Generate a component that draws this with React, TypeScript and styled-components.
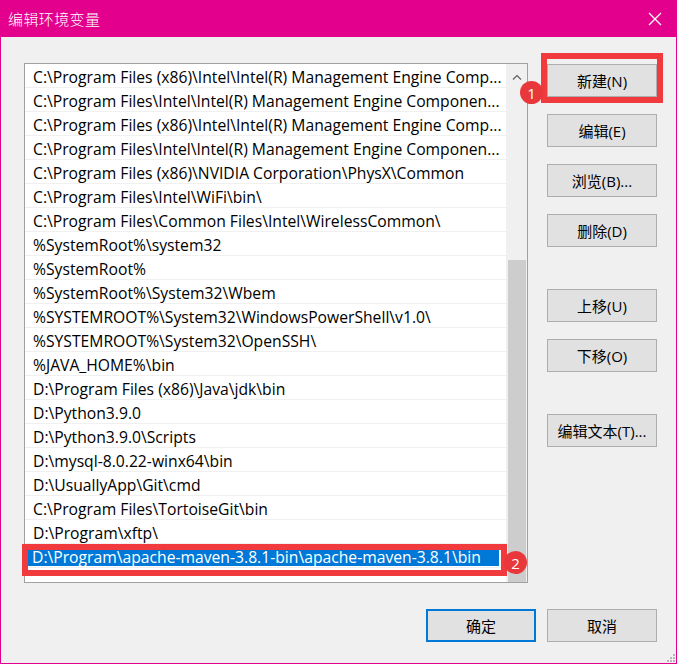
import React from 'react';
import styled, { createGlobalStyle } from 'styled-components';

const GlobalStyle = createGlobalStyle`
  html, body {
    margin: 0;
    padding: 0;
    background: #f0f0f0;
  }
  * {
    box-sizing: border-box;
  }
`;

const paths: string[] = [
  'C:\\Program Files (x86)\\Intel\\Intel(R) Management Engine Comp...',
  'C:\\Program Files\\Intel\\Intel(R) Management Engine Componen...',
  'C:\\Program Files (x86)\\Intel\\Intel(R) Management Engine Comp...',
  'C:\\Program Files\\Intel\\Intel(R) Management Engine Componen...',
  'C:\\Program Files (x86)\\NVIDIA Corporation\\PhysX\\Common',
  'C:\\Program Files\\Intel\\WiFi\\bin\\',
  'C:\\Program Files\\Common Files\\Intel\\WirelessCommon\\',
  '%SystemRoot%\\system32',
  '%SystemRoot%',
  '%SystemRoot%\\System32\\Wbem',
  '%SYSTEMROOT%\\System32\\WindowsPowerShell\\v1.0\\',
  '%SYSTEMROOT%\\System32\\OpenSSH\\',
  '%JAVA_HOME%\\bin',
  'D:\\Program Files (x86)\\Java\\jdk\\bin',
  'D:\\Python3.9.0',
  'D:\\Python3.9.0\\Scripts',
  'D:\\mysql-8.0.22-winx64\\bin',
  'D:\\UsuallyApp\\Git\\cmd',
  'C:\\Program Files\\TortoiseGit\\bin',
  'D:\\Program\\xftp\\',
];

const editing = 'D:\\Program\\apache-maven-3.8.1-bin\\apache-maven-3.8.1\\bin';

const sideButtons = [
  { label: '新建(N)', gap: 0 },
  { label: '编辑(E)', gap: 17 },
  { label: '浏览(B)...', gap: 17 },
  { label: '删除(D)', gap: 17 },
  { label: '上移(U)', gap: 42 },
  { label: '下移(O)', gap: 17 },
  { label: '编辑文本(T)...', gap: 42 },
];

const App = () => {
  return (
    <>
      <GlobalStyle />
      <Window>
        <TitleBar>
          <Title>编辑环境变量</Title>
          <CloseIcon width="14" height="14" viewBox="0 0 14 14">
            <line x1="1" y1="1" x2="13" y2="13" stroke="#fff" strokeWidth="1.2" />
            <line x1="13" y1="1" x2="1" y2="13" stroke="#fff" strokeWidth="1.2" />
          </CloseIcon>
        </TitleBar>
        <Body>
          <Main>
            <ListBox>
              <Rows>
                {paths.map((p, i) => (
                  <Row key={i}>{p}</Row>
                ))}
                <Row>
                  <EditField>{editing}</EditField>
                </Row>
                <RowMarker>
                  <Badge $x={476} $y={1}>2</Badge>
                </RowMarker>
              </Rows>
              <ScrollBar>
                <ArrowBox>
                  <svg width="10" height="6" viewBox="0 0 10 6">
                    <polyline points="1,5.5 5,1.5 9,5.5" fill="none" stroke="#606060" strokeWidth="1.2" />
                  </svg>
                </ArrowBox>
                <Track>
                  <Thumb />
                </Track>
              </ScrollBar>
            </ListBox>
            <ButtonColumn>
              {sideButtons.map((b, i) => (
                <SideSlot key={b.label} $gap={b.gap}>
                  <Button>{b.label}</Button>
                  {i === 0 && (
                    <ButtonMarker>
                      <Badge $x={-27} $y={22}>1</Badge>
                    </ButtonMarker>
                  )}
                </SideSlot>
              ))}
            </ButtonColumn>
          </Main>
          <Footer>
            <Button $primary>确定</Button>
            <Button>取消</Button>
          </Footer>
        </Body>
        <Grip width="8" height="8" viewBox="0 0 8 8">
          <rect x="6" y="0" width="2" height="2" fill="#b8b8b8" />
          <rect x="3" y="3" width="2" height="2" fill="#b8b8b8" />
          <rect x="6" y="3" width="2" height="2" fill="#b8b8b8" />
          <rect x="0" y="6" width="2" height="2" fill="#b8b8b8" />
          <rect x="3" y="6" width="2" height="2" fill="#b8b8b8" />
          <rect x="6" y="6" width="2" height="2" fill="#b8b8b8" />
        </Grip>
      </Window>
    </>
  );
};

export default App;

const uiFont = `"Open Sans", "Noto Sans CJK SC", sans-serif`;

const Window = styled.div`
  position: relative;
  width: 677px;
  height: 664px;
  background: #f0f0f0;
  border: 1px solid #e3008c;
  border-top: none;
  font-family: ${uiFont};
  display: flex;
  flex-direction: column;
`;

const TitleBar = styled.div`
  height: 37px;
  margin: 0 -1px;
  background: #e3008c;
  display: flex;
  align-items: center;
  justify-content: space-between;
  padding: 0 15px 0 8px;
  flex-shrink: 0;
`;

const Title = styled.div`
  color: #ffffff;
  font-family: "Noto Sans CJK SC", sans-serif;
  font-weight: 300;
  font-size: 15px;
  letter-spacing: 0.4px;
`;

const CloseIcon = styled.svg`
  display: block;
`;

const Body = styled.div`
  flex: 1;
  display: flex;
  flex-direction: column;
  padding: 26px 19px 0 23px;
`;

const Main = styled.div`
  display: flex;
  gap: 19px;
`;

const ListBox = styled.div`
  position: relative;
  width: 504px;
  height: 520px;
  background: #ffffff;
  border: 1px solid #a0a0a0;
  display: flex;
`;

const Rows = styled.div`
  position: relative;
  flex: 1;
  display: flex;
  flex-direction: column;
`;

const Row = styled.div`
  height: 24px;
  padding: 2px 0 0 8px;
  border-bottom: 1px solid #f0f0f0;
  display: flex;
  align-items: center;
  font-size: 15.7px;
  color: #000000;
  white-space: nowrap;
  overflow: hidden;
`;

const EditField = styled.span`
  display: flex;
  align-items: center;
  width: 471px;
  height: 19px;
  margin: 0 0 0 -5px;
  padding-left: 4px;
  background: #0078d7;
  color: #ffffff;
`;

const RowMarker = styled.div`
  position: absolute;
  left: -3px;
  top: 480px;
  width: 485px;
  height: 32px;
  border: 6px solid #f03a3d;
`;

const Badge = styled.div<{ $x: number; $y: number }>`
  position: absolute;
  left: ${(p) => p.$x}px;
  top: ${(p) => p.$y}px;
  width: 23px;
  height: 23px;
  border-radius: 50%;
  background: #e8383b;
  color: #ffffff;
  font-family: "Open Sans", sans-serif;
  font-size: 15px;
  display: flex;
  align-items: center;
  justify-content: center;
`;

const ScrollBar = styled.div`
  width: 21px;
  display: flex;
  flex-direction: column;
  background: #f0f0f0;
  border-left: 1px solid #f0f0f0;
`;

const ArrowBox = styled.div`
  height: 17px;
  display: flex;
  align-items: flex-end;
  justify-content: center;
  padding-bottom: 1px;
`;

const Track = styled.div`
  flex: 1;
  display: flex;
  flex-direction: column;
  justify-content: flex-end;
  padding: 0 1px 0 1px;
`;

const Thumb = styled.div`
  height: 322px;
  background: #cdcdcd;
`;

const ButtonColumn = styled.div`
  display: flex;
  flex-direction: column;
  padding-top: 1px;
`;

const SideSlot = styled.div<{ $gap: number }>`
  position: relative;
  margin-top: ${(p) => p.$gap}px;
`;

const ButtonMarker = styled.div`
  position: absolute;
  left: -6px;
  top: -11px;
  width: 122px;
  height: 50px;
  border: 6px solid #f03a3d;
`;

const Button = styled.button<{ $primary?: boolean }>`
  width: 110px;
  height: 33px;
  padding: 0;
  background: #e1e1e1;
  border: ${(p) => (p.$primary ? '2px solid #0078d7' : '1px solid #adadad')};
  color: #000000;
  font-family: ${uiFont};
  font-size: 15px;
  cursor: pointer;
  display: flex;
  align-items: center;
  justify-content: center;
`;

const Footer = styled.div`
  display: flex;
  justify-content: flex-end;
  gap: 11px;
  margin-top: 26px;
`;

const Grip = styled.svg`
  position: absolute;
  right: 1px;
  bottom: 1px;
`;
